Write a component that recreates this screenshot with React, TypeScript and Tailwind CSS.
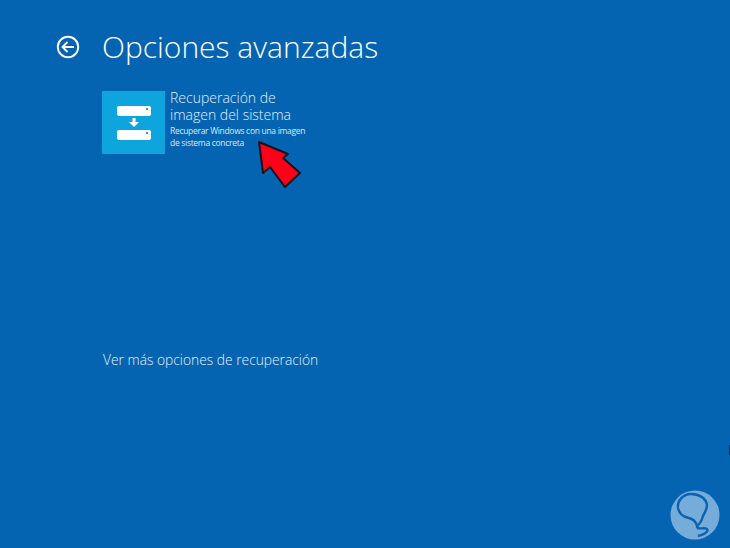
import React from "react";

function BackIcon() {
  return (
    <svg width="24" height="24" viewBox="0 0 24 24" fill="none" stroke="white" className="shrink-0">
      <circle cx="12" cy="12" r="10.2" strokeWidth="1.9" />
      <path d="M18 12H6.5M11.5 7l-5 5 5 5" strokeWidth="1.9" />
    </svg>
  );
}

function DriveIcon() {
  return (
    <svg width="34" height="35" viewBox="0 0 34 35" className="mt-[2px]">
      <rect x="0" y="0" width="34" height="10" rx="2" fill="white" />
      <rect x="29" y="2" width="2" height="2" fill="#0ea5de" />
      <path d="M15.5 12h3v4H22l-5 5-5-5h3.5z" fill="white" />
      <rect x="0" y="24" width="34" height="10" rx="2" fill="white" />
      <rect x="29" y="26" width="2" height="2" fill="#0ea5de" />
    </svg>
  );
}

export default function App() {
  return (
    <div className="relative h-[548px] w-[730px] overflow-hidden bg-[#0564b2] text-white font-['Open_Sans',sans-serif]">
      <div className="flex items-center gap-[22px] pl-[56px] pt-[27px]">
        <BackIcon />
        <h1 className="text-[30px] font-light leading-[40px]">Opciones avanzadas</h1>
      </div>

      <div className="ml-[102px] mt-[24px] flex gap-[5px]">
        <div className="flex h-[63px] w-[63px] items-center justify-center bg-[#0ea5de]">
          <DriveIcon />
        </div>
        <div className="-mt-[2px]">
          <p className="text-[14px] font-light leading-[17px] text-[#e3eff8]">
            Recuperación de
            <br />
            imagen del sistema
          </p>
          <p className="mt-[2px] text-[8.5px] leading-[12px] tracking-[-0.3px] text-[#dbe9f5]">
            Recuperar Windows con una imagen
            <br />
            de sistema concreta
          </p>
        </div>
      </div>

      <p className="ml-[103px] mt-[196px] text-[13.8px] font-light leading-[20px] text-[#e3eff8]">
        Ver más opciones de recuperación
      </p>

      {/* red arrow over the screenshot */}
      <svg className="absolute left-[255px] top-[138px]" width="50" height="52" viewBox="0 0 50 52">
        <path
          d="M4 4 L33 16 L28 20 L45 35 L30 49 L15 29 L8 35 Z"
          fill="#ff0019"
          stroke="#14141f"
          strokeWidth="2"
          strokeLinejoin="round"
        />
      </svg>

      {/* watermark */}
      <svg className="absolute left-[670px] top-[490px]" width="50" height="50" viewBox="0 0 50 50">
        <circle cx="25" cy="25" r="24.5" fill="#75acd9" />
        <path
          d="M28 46C33 45 39 42 37 39C35 37 28 40 27 37C28 34 31 33 32 29C33 24 37 21 37 15C36 8 29 4 21 4C13 4 7 11 8 18C9 24 14 27 19 28C23 29 26 32 27 36"
          fill="none"
          stroke="#0b62ae"
          strokeWidth="2.4"
        />
      </svg>

      <div className="absolute left-[729px] top-[445px] h-[10px] w-[1px] bg-[#0c2a55]" />
    </div>
  );
}
